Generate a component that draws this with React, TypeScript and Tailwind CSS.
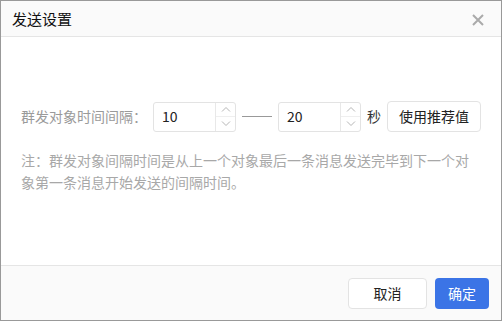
import React, { useState } from "react";

const font = { fontFamily: '"Noto Sans CJK SC", "Noto Sans", sans-serif' };

const Chevron = ({ up }: { up?: boolean }) => (
    <svg width="10" height="6" viewBox="0 0 10 6" fill="none">
        <path
            d={up ? "M1 5.5L5 1.5L9 5.5" : "M1 0.5L5 4.5L9 0.5"}
            stroke="#b5b5b5"
            strokeWidth="1"
        />
    </svg>
);

const NumberBox = ({ value }: { value: string }) => (
    <div className="flex h-[30px] w-[83px] rounded-[3px] border border-[#e3e3e3] bg-white">
        <div className="flex flex-1 items-center pl-[8px] text-[14px] text-[#222]">{value}</div>
        <div className="flex w-[20px] flex-col border-l border-[#e8e8e8]">
            <div className="flex flex-1 items-center justify-center border-b border-[#efefef]">
                <Chevron up />
            </div>
            <div className="flex flex-1 items-center justify-center">
                <Chevron />
            </div>
        </div>
    </div>
);

const App = () => {
    const [min] = useState("10");
    const [max] = useState("20");
    return (
        <div style={font} className="flex h-[321px] w-[502px] flex-col border border-[#999] bg-white">
            <div className="flex h-[36px] items-center justify-between border-b border-[#e5e5e5] bg-[#fafafa] pl-[11px] pr-[17px] pt-[2px]">
                <span className="text-[15px] text-[#111]">发送设置</span>
                <svg width="12" height="12" viewBox="0 0 12 12">
                    <path d="M1 1L11 11M11 1L1 11" stroke="#aaa" strokeWidth="2" />
                </svg>
            </div>
            <div className="flex-1 px-[20px] pt-[64px]">
                <div className="flex items-center gap-[6px] text-[14px]">
                    <span className="text-[#9a9a9a]">群发对象时间间隔：</span>
                    <NumberBox value={min} />
                    <div className="h-px w-[30px] bg-[#999]" />
                    <NumberBox value={max} />
                    <span className="text-[#333]">秒</span>
                    <button className="h-[31px] w-[94px] rounded-[4px] border border-[#e3e3e3] bg-white text-[14px] text-[#222]">
                        使用推荐值
                    </button>
                </div>
                <p className="mt-[17px] text-[14px] leading-[22px] text-[#a8a8a8]">
                    注：群发对象间隔时间是从上一个对象最后一条消息发送完毕到下一个对象第一条消息开始发送的间隔时间。
                </p>
            </div>
            <div className="flex h-[55px] items-center justify-end gap-[8px] border-t border-[#e5e5e5] bg-[#fafafa] pr-[12px]">
                <button className="h-[31px] w-[79px] rounded-[4px] border border-[#e3e3e3] bg-white text-[14px] text-[#222]">
                    取消
                </button>
                <button className="h-[31px] w-[54px] rounded-[4px] bg-[#3b74e6] text-[14px] text-white">
                    确定
                </button>
            </div>
        </div>
    );
};

export default App;
